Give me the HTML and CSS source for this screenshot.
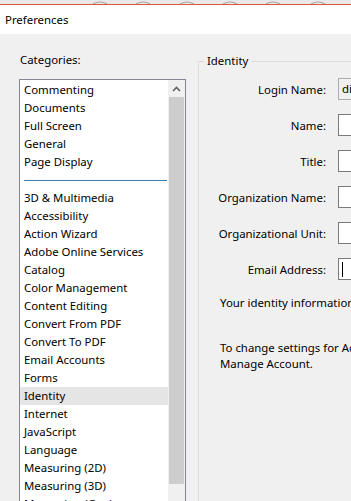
FILE: index.html
```html
<!DOCTYPE html>
<html lang="en">
<head>
  <meta charset="UTF-8" />
  <meta name="viewport" content="width=device-width, initial-scale=1.0"/>
  <title>Preferences</title>
  <link rel="stylesheet" href="styles.css">
</head>

<body>
  <!-- tira de pestañas del navegador detrás -->
  <div class="tabstrip">
    <svg width="351" height="6" viewBox="0 0 351 6">
      <rect x="0" y="0" width="351" height="4" fill="#e9e9e9"/>
      <path d="M93 4 Q100 0 107 4 M136 4 Q143 0 150 4 M180 4 Q187 0 194 4 M223 4 Q230 0 237 4 M266 4 Q273 0 280 4 M311 4 Q318 0 325 4" fill="none" stroke="#a9a9a9" stroke-width="1.2"/>
      <line x1="0" y1="4.5" x2="351" y2="4.5" stroke="#e2543f" stroke-width="1"/>
    </svg>
  </div>

  <header class="titlebar">Preferences</header>

  <div class="dialog">
    <div class="categories">
      <div class="cat-label">Categories:</div>
      <div class="listbox">
        <ul class="list">
          <li>Commenting</li>
          <li>Documents</li>
          <li>Full Screen</li>
          <li>General</li>
          <li>Page Display</li>
          <li class="sep"></li>
          <li>3D &amp; Multimedia</li>
          <li>Accessibility</li>
          <li>Action Wizard</li>
          <li>Adobe Online Services</li>
          <li>Catalog</li>
          <li>Color Management</li>
          <li>Content Editing</li>
          <li>Convert From PDF</li>
          <li>Convert To PDF</li>
          <li>Email Accounts</li>
          <li>Forms</li>
          <li class="selected">Identity</li>
          <li>Internet</li>
          <li>JavaScript</li>
          <li>Language</li>
          <li>Measuring (2D)</li>
          <li>Measuring (3D)</li>
          <li>Measuring (Geo)</li>
        </ul>
        <div class="scrollbar">
          <div class="arrow">
            <svg width="9" height="6" viewBox="0 0 9 6">
              <polyline points="1,5 4.5,1.5 8,5" fill="none" stroke="#606060" stroke-width="1.6"/>
            </svg>
          </div>
          <div class="thumb"></div>
        </div>
      </div>
    </div>

    <fieldset class="identity">
      <legend>Identity</legend>
      <div class="form">
        <label>Login Name:</label>
        <div class="field disabled">di</div>
        <label>Name:</label>
        <div class="field"></div>
        <label>Title:</label>
        <div class="field"></div>
        <label>Organization Name:</label>
        <div class="field"></div>
        <label>Organizational Unit:</label>
        <div class="field"></div>
        <label>Email Address:</label>
        <div class="field focused"><span class="caret"></span></div>
      </div>
      <p class="info">Your identity information is used when creating comments and reviews.</p>
      <p class="info">To change settings for Adobe Online Services, go to<br>Manage Account.</p>
    </fieldset>
  </div>
</body>
</html>
```

FILE: styles.css
```css
/* ventana de preferencias */

body {
  margin: 0;
  width: 351px;
  height: 501px;
  overflow: hidden;
  font-family: "Noto Sans", "Open Sans", sans-serif;
  font-size: 11.4px;
  color: #000;
  background: #f0f0f0;
}

.tabstrip {
  height: 5px;
  overflow: hidden;
  background: #fff;
}

.tabstrip svg {
  display: block;
}

.titlebar {
  height: 29px;
  line-height: 29px;
  padding-left: 5px;
  background: #fff;
}

.dialog {
  display: flex;
  padding-top: 16px;
}

.categories {
  width: 167px;
  margin-left: 19px;
  flex-shrink: 0;
}

.cat-label {
  height: 20px;
  line-height: 20px;
  padding-left: 1px;
}

.listbox {
  display: flex;
  margin-top: 9px;
  height: 440px;
  border: 1px solid #828790;
  background: #fff;
}

.list {
  list-style: none;
  margin: 0;
  padding: 1px 0 0;
  flex: 1;
}

.list li {
  height: 18px;
  line-height: 18px;
  padding-left: 4px;
  white-space: nowrap;
}

.list li.sep {
  position: relative;
}

.list li.sep::after {
  content: "";
  position: absolute;
  left: 4px;
  right: 1px;
  top: 9px;
  border-top: 1px solid #3c7fb1;
}

.list li.selected {
  background: #e5e5e5;
}

.scrollbar {
  width: 17px;
  background: #f0f0f0;
}

.scrollbar .arrow {
  height: 17px;
  display: flex;
  align-items: center;
  justify-content: center;
}

.scrollbar .arrow svg {
  display: block;
}

.scrollbar .thumb {
  margin: 0 1px;
  height: 387px;
  background: #cdcdcd;
}

.identity {
  margin: 3px 0 0 12px;
  padding: 0;
  border: 1px solid #dcdcdc;
  border-right: none;
  border-bottom: none;
  flex: 1;
  min-width: 0;
  height: 460px;
}

.identity legend {
  margin-left: 5px;
  padding: 0 3px;
  line-height: 16px;
}

.form {
  display: grid;
  grid-template-columns: 127px 1fr;
  column-gap: 12px;
  row-gap: 14px;
  margin-top: 9px;
  align-items: center;
}

.form label {
  text-align: right;
  white-space: nowrap;
}

.field {
  height: 20px;
  line-height: 20px;
  padding-left: 3px;
  border: 1px solid #7a7a7a;
  border-right: none;
  background: #fff;
}

.field.disabled {
  background: #f0f0f0;
  border-color: #adadad;
}

.field.focused {
  position: relative;
}

.caret {
  position: absolute;
  left: 3px;
  top: 3px;
  height: 15px;
  border-left: 1px solid #000;
}

.info {
  margin: 0;
  padding-left: 21px;
  white-space: nowrap;
  line-height: 16px;
}

.info:first-of-type {
  margin-top: 15px;
}

.info + .info {
  margin-top: 29px;
}
```
